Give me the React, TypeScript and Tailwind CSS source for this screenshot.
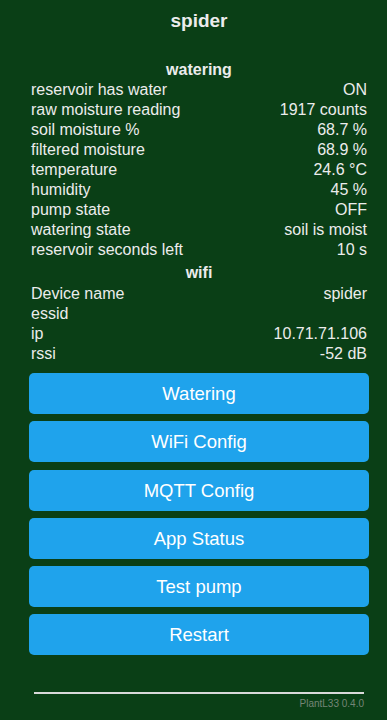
import React from "react";

const watering: [string, string][] = [
  ["reservoir has water", "ON"],
  ["raw moisture reading", "1917 counts"],
  ["soil moisture %", "68.7 %"],
  ["filtered moisture", "68.9 %"],
  ["temperature", "24.6 °C"],
  ["humidity", "45 %"],
  ["pump state", "OFF"],
  ["watering state", "soil is moist"],
  ["reservoir seconds left", "10 s"],
];

const wifi: [string, string][] = [
  ["Device name", "spider"],
  ["essid", ""],
  ["ip", "10.71.71.106"],
  ["rssi", "-52 dB"],
];

const buttons = ["Watering", "WiFi Config", "MQTT Config", "App Status", "Test pump", "Restart"];

function Row({ k, v }: { k: string; v: string }) {
  return (
    <div className="flex h-[20px] items-center justify-between px-[2px] text-[16px] leading-[20px]">
      <span>{k}</span>
      <span>{v}</span>
    </div>
  );
}

export default function App() {
  return (
    <div
      className="min-h-[720px] w-full bg-[#0a3f16] text-[#ececec]"
      style={{ fontFamily: '"Liberation Sans", Arial, sans-serif' }}
    >
      <div className="pl-[29px] pr-[18px] pt-[9px]">
        <div className="h-[24px] text-center text-[19px] font-bold leading-[24px]">spider</div>
        <div className="mt-[27px] h-[20px] text-center text-[16px] font-bold leading-[20px]">watering</div>
        {watering.map(([k, v]) => (
          <Row key={k} k={k} v={v} />
        ))}
        <div className="mt-[2px] h-[22px] text-center text-[16px] font-bold leading-[22px]">wifi</div>
        <div>
          {wifi.map(([k, v]) => (
            <Row key={k} k={k} v={v} />
          ))}
        </div>
        <div className="mt-[9px] flex flex-col gap-[7.25px]">
          {buttons.map((b) => (
            <button
              key={b}
              className="h-[41px] w-full rounded-[5px] bg-[#1fa3ec] text-[18.5px] leading-[41px] text-white"
            >
              {b}
            </button>
          ))}
        </div>
        <div className="mx-[5px] mt-[37px] border-t-2 border-[#d9d9d9]" />
        <div className="mx-[5px] mt-[3px] text-right text-[10px] leading-[14px] text-[#758577]">PlantL33 0.4.0</div>
      </div>
    </div>
  );
}
